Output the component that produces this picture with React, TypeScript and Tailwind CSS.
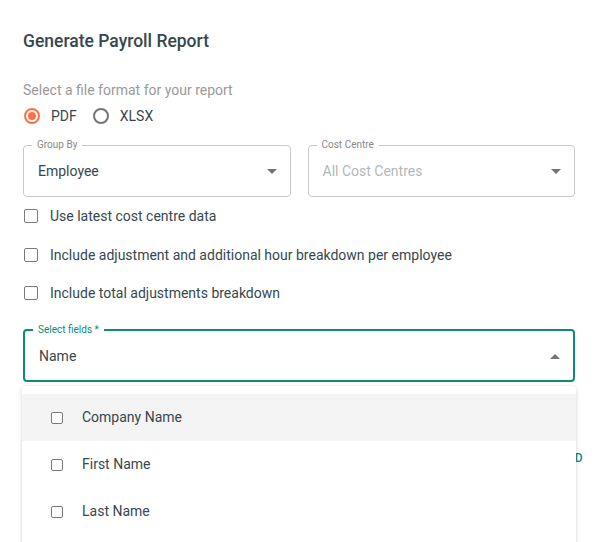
import React from "react";

function Caret({ up = false }: { up?: boolean }) {
  return (
    <svg width="10" height="5" viewBox="0 0 10 5" className="shrink-0">
      {up ? <path d="M0 5 L5 0 L10 5 Z" fill="#757575" /> : <path d="M0 0 L5 5 L10 0 Z" fill="#757575" />}
    </svg>
  );
}

function Box({ size = 14 }: { size?: number }) {
  return (
    <span
      className="inline-block shrink-0 rounded-[2px] border-[1.5px] border-[#7a7a7a] bg-white"
      style={{ width: size, height: size }}
    />
  );
}

function Outlined({
  label,
  value,
  muted = false,
  focused = false,
  up = false,
}: {
  label: string;
  value: string;
  muted?: boolean;
  focused?: boolean;
  up?: boolean;
}) {
  return (
    <fieldset
      className={
        "m-0 h-[57px] rounded-[4px] px-[14px] pb-0 pt-0 flex items-center justify-between " +
        (focused ? "border-2 border-[#0e8a78]" : "border border-[#c9c9c9]")
      }
    >
      <legend
        className={
          "-ml-[6px] px-[5px] text-[10px] leading-none " + (focused ? "text-[#0e8a78]" : "text-[#8a8a8a]")
        }
      >
        {label}
      </legend>
      <span className={"-mt-[3px] text-[14px] " + (muted ? "text-[#b3b8bb]" : "text-[#37474f]")}>{value}</span>
      <span className="-mt-[3px] mr-[-1px]">
        <Caret up={up} />
      </span>
    </fieldset>
  );
}

export default function App() {
  return (
    <div
      className="relative h-[542px] w-[598px] overflow-hidden bg-white px-[23px]"
      style={{ fontFamily: "Roboto, 'Noto Sans', sans-serif" }}
    >
      <h1 className="pt-[31px] text-[17.5px] font-medium leading-[20px] text-[#37474f]">Generate Payroll Report</h1>

      <p className="mt-[30px] text-[14px] leading-[18px] text-[#9a9a9a]">Select a file format for your report</p>

      <div className="mt-[7px] flex h-[20px] items-center text-[14px] text-[#37474f]">
        <span className="ml-[1px] flex h-[16px] w-[16px] items-center justify-center rounded-full border-2 border-[#ff7043]">
          <span className="h-[8px] w-[8px] rounded-full bg-[#ff7043]" />
        </span>
        <span className="ml-[11px]">PDF</span>
        <span className="ml-[16px] h-[16px] w-[16px] rounded-full border-2 border-[#757575]" />
        <span className="ml-[11px]">XLSX</span>
      </div>

      <div className="mt-[14px] grid grid-cols-2 gap-[17px]">
        <Outlined label="Group By" value="Employee" />
        <Outlined label="Cost Centre" value="All Cost Centres" muted />
      </div>

      <div className="mt-[9px] flex flex-col text-[14px] text-[#37474f]">
        <label className="flex h-[20px] items-center gap-[12px] pl-[1px]">
          <Box />
          <span>Use latest cost centre data</span>
        </label>
        <label className="mt-[19px] flex h-[20px] items-center gap-[12px] pl-[1px]">
          <Box />
          <span>Include adjustment and additional hour breakdown per employee</span>
        </label>
        <label className="mt-[18px] flex h-[20px] items-center gap-[12px] pl-[1px]">
          <Box />
          <span>Include total adjustments breakdown</span>
        </label>
      </div>

      <div className="mt-[22px]">
        <Outlined label="Select fields *" value="Name" focused up />
      </div>

      <div className="mt-[67px] flex justify-end">
        <span className="mr-[-8px] text-[12px] font-medium tracking-wide text-[#0e8a78]">DOWNLOAD</span>
      </div>

      <div className="absolute left-[22px] top-[386px] h-[170px] w-[554px] rounded-t-[4px] bg-white pt-[8px] shadow-[0_1px_4px_rgba(0,0,0,0.18)]">
        {["Company Name", "First Name", "Last Name"].map((t, i) => (
          <div
            key={t}
            className={
              "flex h-[47px] items-center gap-[19px] pl-[29px] text-[14px] text-[#37474f] " +
              (i === 0 ? "bg-[#f4f4f4]" : "")
            }
          >
            <Box size={12} />
            <span>{t}</span>
          </div>
        ))}
      </div>
    </div>
  );
}
